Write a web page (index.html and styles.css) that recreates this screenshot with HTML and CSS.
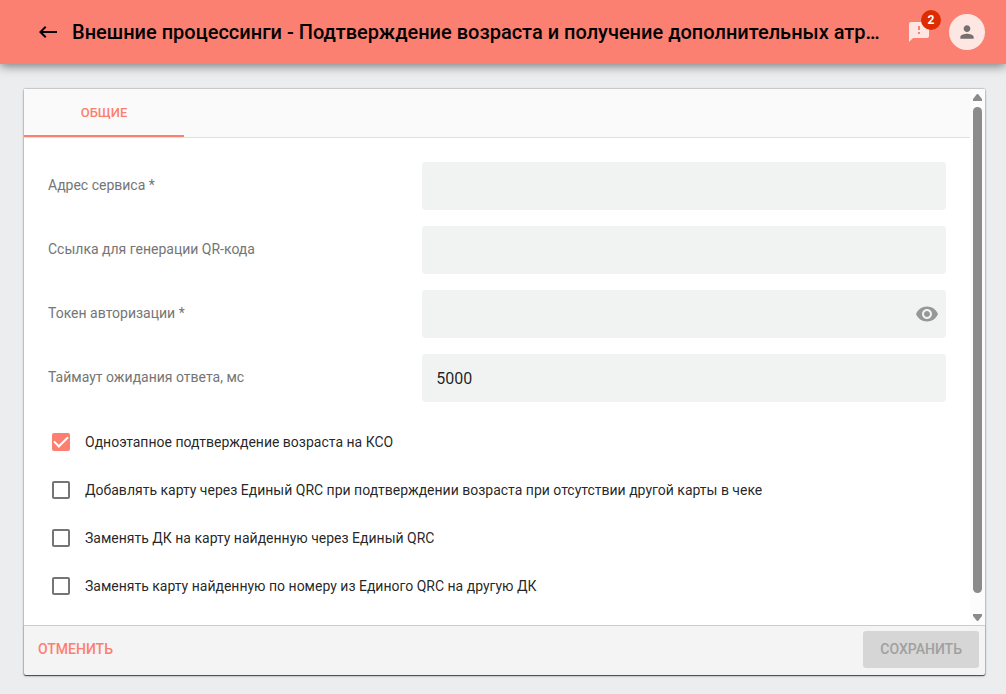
FILE: index.html
```html
<!DOCTYPE html>
<html lang="ru">
<head>
<meta charset="utf-8">
<meta name="viewport" content="width=device-width, initial-scale=1">
<title>Внешние процессинги</title>
<link rel="stylesheet" href="styles.css">
</head>
<body>
<header class="toolbar">
  <button class="icon-button" type="button" aria-label="Назад">
    <svg width="24" height="24" viewBox="0 0 24 24" fill="currentColor"><path d="M21 11H6.8l3.6-3.6L9 6l-6 6 6 6 1.4-1.4L6.8 13H21z"/></svg>
  </button>
  <h1 class="title">Внешние процессинги - Подтверждение возраста и получение дополнительных атр…</h1>
  <button class="icon-button notifications" type="button" aria-label="Уведомления">
    <svg width="24" height="24" viewBox="0 0 24 24" fill="currentColor"><path d="M20 2H4c-1.100 0-2 .9-2 2v18l4-4h14c1.100 0 2-.9 2-2V4c0-1.100-.9-2-2-2zm-7 12h-2v-2h2v2zm0-4h-2V6h2v4z"/></svg>
    <span class="badge">2</span>
  </button>
  <button class="avatar" type="button" aria-label="Профиль">
    <svg width="20" height="20" viewBox="0 0 24 24" fill="currentColor"><path d="M12 12c2.200 0 4-1.800 4-4s-1.800-4-4-4-4 1.800-4 4 1.800 4 4 4zm0 2c-2.700 0-8 1.300-8 4v2h16v-2c0-2.700-5.300-4-8-4z"/></svg>
  </button>
</header>

<main class="page">
  <form class="card">
    <div class="scroll-area">
      <div class="content">
        <nav class="tabs">
          <button class="tab" type="button">ОБЩИЕ</button>
        </nav>
        <div class="fields">
          <div class="field">
            <label for="address">Адрес сервиса *</label>
            <div class="control"><input id="address" type="text"></div>
          </div>
          <div class="field">
            <label for="link">Ссылка для генерации QR-кода</label>
            <div class="control"><input id="link" type="text"></div>
          </div>
          <div class="field">
            <label for="token">Токен авторизации *</label>
            <div class="control">
              <input id="token" type="password">
              <button class="reveal" type="button" aria-label="Показать токен">
                <svg width="24" height="24" viewBox="0 0 24 24" fill="currentColor"><path d="M12 4.500C7 4.500 2.730 7.610 1 12c1.730 4.390 6 7.500 11 7.500s9.270-3.110 11-7.500c-1.730-4.390-6-7.500-11-7.500zM12 17c-2.760 0-5-2.240-5-5s2.240-5 5-5 5 2.240 5 5-2.240 5-5 5zm0-8c-1.660 0-3 1.340-3 3s1.340 3 3 3 3-1.340 3-3-1.340-3-3-3z"/></svg>
              </button>
            </div>
          </div>
          <div class="field">
            <label for="timeout">Таймаут ожидания ответа, мс</label>
            <div class="control"><input id="timeout" type="text" value="5000"></div>
          </div>
        </div>
        <div class="options">
          <label class="option"><input type="checkbox" checked>Одноэтапное подтверждение возраста на КСО</label>
          <label class="option"><input type="checkbox">Добавлять карту через Единый QRC при подтверждении возраста при отсутствии другой карты в чеке</label>
          <label class="option"><input type="checkbox">Заменять ДК на карту найденную через Единый QRC</label>
          <label class="option"><input type="checkbox">Заменять карту найденную по номеру из Единого QRC на другую ДК</label>
        </div>
      </div>
      <div class="scrollbar" aria-hidden="true">
        <svg width="9" height="7" viewBox="0 0 9 7" fill="currentColor"><path d="M4 0h1l4 5v2H0V5z"/></svg>
        <div class="track"><div class="thumb"></div></div>
        <svg width="9" height="7" viewBox="0 0 9 7" fill="currentColor"><path d="M4 7h1l4-5V0H0v2z"/></svg>
      </div>
    </div>
    <footer class="actions">
      <button class="cancel" type="button">ОТМЕНИТЬ</button>
      <button class="save" type="submit" disabled>СОХРАНИТЬ</button>
    </footer>
  </form>
</main>
</body>
</html>
```
FILE: styles.css
```css
* {
  box-sizing: border-box;
}

body {
  margin: 0;
  min-height: 100vh;
  display: flex;
  flex-direction: column;
  background: #ebedef;
  color: rgba(0, 0, 0, 0.87);
  font: 14px/20px Roboto, "Noto Sans", sans-serif;
}

button,
input {
  font: inherit;
  margin: 0;
  padding: 0;
  border: 0;
}

button {
  background: none;
  cursor: pointer;
}

svg {
  display: block;
}

.toolbar {
  display: flex;
  align-items: center;
  height: 64px;
  padding: 0 21px 0 36px;
  background: #fb8071;
  color: #000;
  box-shadow: 0 2px 10px rgba(0, 0, 0, 0.5);
}

.icon-button {
  flex: none;
}

.title {
  flex: 1;
  min-width: 0;
  margin: 0 12px;
  overflow: hidden;
  white-space: nowrap;
  text-overflow: ellipsis;
  font-size: 20px;
  line-height: 32px;
  font-weight: 500;
}

.notifications {
  position: relative;
  margin-right: 18px;
  color: rgba(255, 255, 255, 0.8);
}

.badge {
  position: absolute;
  top: -10px;
  right: -10px;
  width: 20px;
  height: 20px;
  border-radius: 50%;
  background: #dd2c00;
  color: #fff;
  font-size: 12px;
  font-weight: 700;
  line-height: 20px;
}

.avatar {
  display: flex;
  flex: none;
  align-items: center;
  justify-content: center;
  width: 36px;
  height: 36px;
  border-radius: 50%;
  background: rgba(255, 255, 255, 0.8);
  color: #757070;
}

.page {
  flex: 1;
  display: flex;
  padding: 25px 21px 20px 24px;
}

.card {
  flex: 1;
  min-width: 0;
  display: flex;
  flex-direction: column;
  background: #fff;
  border-radius: 2px;
  box-shadow: 0 0 1px 1px rgba(0, 0, 0, 0.14), 0 1px 3px rgba(0, 0, 0, 0.2);
}

.scroll-area {
  flex: 1;
  display: flex;
}

.content {
  flex: 1;
  min-width: 0;
}

.tabs {
  display: flex;
  height: 49px;
  background: #fafafa;
  border-bottom: 1px solid #e0e0e0;
}

.tab {
  width: 160px;
  padding-top: 2px;
  border-bottom: 2px solid #fb8071;
  color: #fb8071;
  font-weight: 500;
  font-size: 13px;
}

.fields {
  display: grid;
  gap: 16px;
  padding: 24px 24px 16px;
}

.field {
  display: grid;
  grid-template-columns: 5fr 7fr;
  align-items: center;
}

.field label {
  padding-bottom: 2px;
  color: #757575;
}

.control {
  display: flex;
  align-items: center;
  height: 48px;
  padding: 0 7px 0 14px;
  border-radius: 4px;
  background: #f1f3f3;
}

.control input {
  flex: 1;
  min-width: 0;
  height: 48px;
  background: none;
  outline: 0;
  color: rgba(0, 0, 0, 0.87);
  font-size: 16px;
}

.reveal {
  color: #969797;
}

.options {
  padding: 0 28px 15px;
}

.option {
  display: flex;
  align-items: center;
  gap: 15px;
  min-height: 48px;
}

.option input {
  appearance: none;
  flex: none;
  width: 18px;
  height: 18px;
  border: 2px solid #757575;
  border-radius: 2px;
}

.option input:checked {
  border: 0;
  background: #fb8071;
}

.option input:checked::before {
  content: "";
  display: block;
  width: 6px;
  height: 12px;
  margin: 1px 0 0 6px;
  border: solid #fff;
  border-width: 0 2px 2px 0;
  transform: translate(-1px, -1px) rotate(45deg);
}

.scrollbar {
  display: flex;
  flex: none;
  flex-direction: column;
  align-items: center;
  gap: 6px;
  width: 15px;
  padding: 5px 0 4px;
  background: #fcfcfc;
  color: #8b8b8b;
}

.track {
  flex: 1;
  width: 9px;
}

.thumb {
  height: 97%;
  border-radius: 5px;
  background: #8b8b8b;
}

.actions {
  display: flex;
  align-items: flex-start;
  justify-content: space-between;
  padding: 5px 6px 7px;
  background: #f4f4f4;
  border-top: 1px solid #ccc;
  border-radius: 0 0 2px 2px;
  box-shadow: 0 1px 1px rgba(0, 0, 0, 0.6);
}

.actions button {
  height: 37px;
  padding: 0 17px 2px;
  font-weight: 500;
}

.actions .cancel {
  padding: 0 8px 2px;
  color: #fb8071;
}

.save {
  border-radius: 3px;
  background: #d6d6d6;
  color: #a0a0a0;
}
```
